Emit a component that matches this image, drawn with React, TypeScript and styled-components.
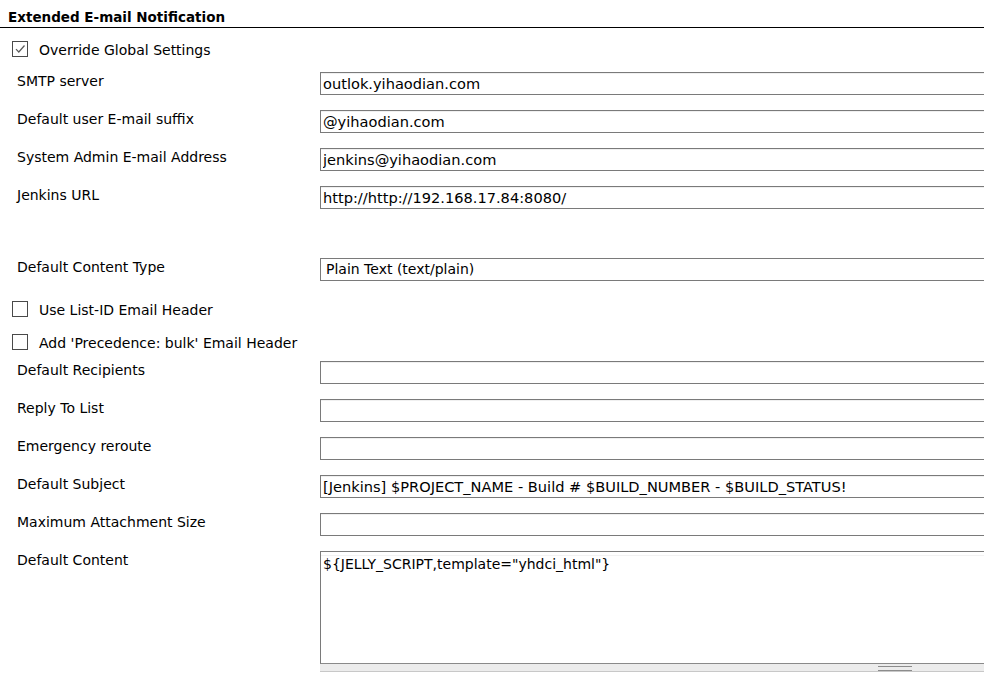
import styled, { createGlobalStyle } from "styled-components";

const GlobalStyle = createGlobalStyle`
    html, body {
        margin: 0;
        padding: 0;
        background: #ffffff;
        overflow: hidden;
    }
    body {
        font-family: "DejaVu Sans", Verdana, sans-serif;
        font-size: 14px;
        color: #000000;
    }
`;

const Page = styled.div`
    width: 984px;
    height: 676px;
    overflow: hidden;
`;

const SectionHeader = styled.div`
    margin-top: 9px;
    padding-left: 8px;
    font-weight: bold;
    font-size: 13.5px;
    line-height: 17px;
    border-bottom: 1px solid #000000;
    padding-bottom: 1px;
`;

const Form = styled.div`
    display: flex;
    flex-direction: column;
`;

const CheckRow = styled.label<{ $top: number }>`
    display: flex;
    align-items: center;
    gap: 11px;
    margin-top: ${(p) => p.$top}px;
    padding-left: 12px;
    height: 18px;
`;

const Box = styled.span`
    width: 14px;
    height: 14px;
    border: 1px solid #4a4a4a;
    background: #ffffff;
    display: flex;
    align-items: center;
    justify-content: center;
    margin-top: -3px;
`;

const FieldRow = styled.div<{ $top: number }>`
    display: grid;
    grid-template-columns: 303px 1fr;
    margin-top: ${(p) => p.$top}px;
    padding-left: 17px;
`;

const Label = styled.div`
    line-height: 18px;
`;

const TextInput = styled.input`
    box-sizing: border-box;
    width: 720px;
    height: 23px;
    padding: 0 2px;
    border: 1px solid #7a7a7a;
    box-shadow: inset 0 1px 0 #f0f0f0;
    font-family: inherit;
    font-size: 14.6px;
    color: #000000;
    background: #ffffff;
    outline: none;
`;

const SelectBox = styled.div`
    box-sizing: border-box;
    width: 720px;
    height: 23px;
    padding: 0 5px;
    border: 1px solid #7a7a7a;
    line-height: 21px;
    background: #ffffff;
`;

const TextAreaWrap = styled.div`
    width: 720px;
    display: flex;
    flex-direction: column;
`;

const TextArea = styled.textarea`
    box-sizing: border-box;
    width: 720px;
    height: 113px;
    padding: 4px 2px 2px;
    border: 1px solid #7a7a7a;
    border-bottom: 1px solid #8a8a8a;
    box-shadow: inset 0 3px 0 #ffffff, inset 0 4px 0 #f2f2f2;
    font-family: inherit;
    font-size: 14px;
    line-height: 17px;
    resize: none;
    outline: none;
    display: block;
`;

const ResizeBar = styled.div`
    width: 664px;
    height: 7px;
    background: #ececec;
    border-bottom: 1px solid #c8c8c8;
    position: relative;
`;

const Grip = styled.span`
    position: absolute;
    left: 558px;
    top: 2px;
    width: 34px;
    height: 3px;
    border-top: 1px solid #8c8c8c;
    border-bottom: 1px solid #8c8c8c;
`;

const CheckMark = () => (
    <svg width="12" height="12" viewBox="0 0 12 12">
        <path d="M2 6.2 L4.8 9 L10.5 2.5" fill="none" stroke="#5a5a5a" strokeWidth="1.2" />
    </svg>
);

const fields1 = [
    { label: "SMTP server", value: "outlok.yihaodian.com" },
    { label: "Default user E-mail suffix", value: "@yihaodian.com" },
    { label: "System Admin E-mail Address", value: "jenkins@yihaodian.com" },
    { label: "Jenkins URL", value: "http://http://192.168.17.84:8080/" },
];

const fields2 = [
    { label: "Default Recipients", value: "" },
    { label: "Reply To List", value: "" },
    { label: "Emergency reroute", value: "" },
    { label: "Default Subject", value: "[Jenkins] $PROJECT_NAME - Build # $BUILD_NUMBER - $BUILD_STATUS!" },
    { label: "Maximum Attachment Size", value: "" },
];

const App = () => {
    return (
        <>
            <GlobalStyle />
            <Page>
                <SectionHeader>Extended E-mail Notification</SectionHeader>
                <Form>
                    <CheckRow $top={13}>
                        <Box>
                            <CheckMark />
                        </Box>
                        <span>Override Global Settings</span>
                    </CheckRow>
                    {fields1.map((f, i) => (
                        <FieldRow key={f.label} $top={i === 0 ? 13 : 15}>
                            <Label>{f.label}</Label>
                            <TextInput readOnly value={f.value} />
                        </FieldRow>
                    ))}
                    <FieldRow $top={49}>
                        <Label>Default Content Type</Label>
                        <SelectBox>Plain Text (text/plain)</SelectBox>
                    </FieldRow>
                    <CheckRow $top={20}>
                        <Box />
                        <span>Use List-ID Email Header</span>
                    </CheckRow>
                    <CheckRow $top={15}>
                        <Box />
                        <span>Add 'Precedence: bulk' Email Header</span>
                    </CheckRow>
                    {fields2.map((f, i) => (
                        <FieldRow key={f.label} $top={i === 0 ? 9 : 15}>
                            <Label>{f.label}</Label>
                            <TextInput readOnly value={f.value} />
                        </FieldRow>
                    ))}
                    <FieldRow $top={15}>
                        <Label>Default Content</Label>
                        <TextAreaWrap>
                            <TextArea readOnly value={'${JELLY_SCRIPT,template="yhdci_html"}'} />
                            <ResizeBar>
                                <Grip />
                            </ResizeBar>
                        </TextAreaWrap>
                    </FieldRow>
                </Form>
            </Page>
        </>
    );
};

export default App;
